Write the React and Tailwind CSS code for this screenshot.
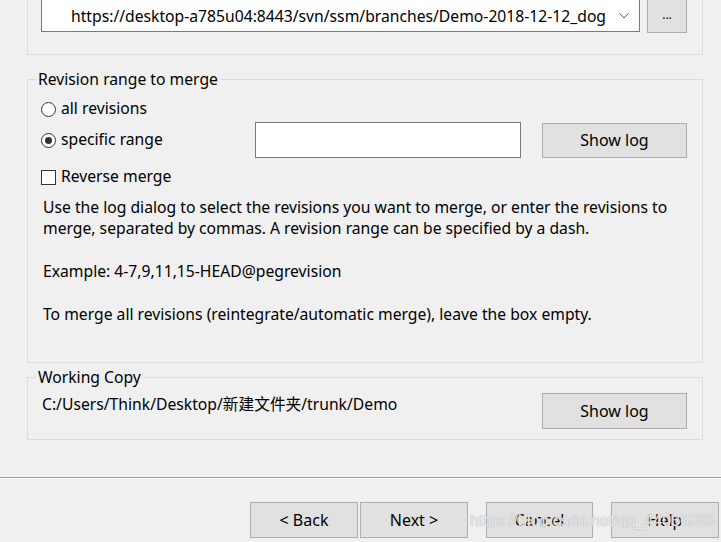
import React from "react";

const font = { fontFamily: '"Noto Sans", "Noto Sans CJK SC", sans-serif' };

function Btn({ children, className = "" }) {
  return (
    <div
      className={
        "flex items-center justify-center bg-[#e1e1e1] border border-[#adadad] text-[16px] text-black " +
        className
      }
    >
      {children}
    </div>
  );
}

function Radio({ checked }) {
  return (
    <span className="w-[15px] h-[15px] rounded-full border border-[#333] bg-white flex items-center justify-center shrink-0">
      {checked && <span className="w-[7px] h-[7px] rounded-full bg-[#333]" />}
    </span>
  );
}

export default function App() {
  return (
    <div
      className="relative w-[721px] h-[542px] overflow-hidden bg-[#f0f0f0] text-black flex flex-col text-[15.7px]"
      style={font}
    >
      {/* top group (cut off) */}
      <div className="ml-[27px] w-[676px] h-[55px] border-x border-b border-[#dcdcdc] flex items-start shrink-0">
        <div className="ml-[13px] w-[599px] h-[32px] bg-white border-x border-b border-[#7a7a7a] flex items-center pl-[29px] pr-[10px]">
          <span className="flex-1 leading-[20px] whitespace-nowrap overflow-hidden">
            https://desktop-a785u04:8443/svn/ssm/branches/Demo-2018-12-12_dog
          </span>
          <svg width="10" height="6" viewBox="0 0 10 6" className="ml-[8px] shrink-0">
            <path d="M0.5 0.5 L5 5 L9.5 0.5" fill="none" stroke="#555" strokeWidth="1" />
          </svg>
        </div>
        <div className="ml-[7px] w-[40px] h-[33px] bg-[#e1e1e1] border-x border-b border-[#adadad] flex items-center justify-center text-[12px] leading-none pb-[2px]">
          ...
        </div>
      </div>

      {/* Revision range */}
      <fieldset className="ml-[27px] mt-[14px] w-[676px] h-[294px] border border-[#dcdcdc] shrink-0">
        <legend className="ml-[8px] px-[2px] leading-[20px]">Revision range to merge</legend>
        <div className="flex items-center h-[20px] mt-[10px] ml-[13px]">
          <Radio />
          <span className="ml-[5px]">all revisions</span>
        </div>
        <div className="flex items-center h-[36px] mt-[3px] ml-[13px]">
          <Radio checked />
          <span className="ml-[5px] w-[194px]">specific range</span>
          <div className="w-[266px] h-[36px] bg-white border border-[#7a7a7a]" />
          <Btn className="ml-[21px] w-[145px] h-[35px]">Show log</Btn>
        </div>
        <div className="flex items-center h-[20px] mt-[9px] ml-[13px]">
          <span className="w-[15px] h-[15px] border border-[#333] bg-white shrink-0" />
          <span className="ml-[5px]">Reverse merge</span>
        </div>
        <div className="ml-[15px] mt-[10px] leading-[21px]">
          <p className="whitespace-nowrap">
            Use the log dialog to select the revisions you want to merge, or enter the revisions to
            <br />
            merge, separated by commas. A revision range can be specified by a dash.
          </p>
          <p className="mt-[22px]">Example: 4-7,9,11,15-HEAD@pegrevision</p>
          <p className="mt-[22px]">
            To merge all revisions (reintegrate/automatic merge), leave the box empty.
          </p>
        </div>
      </fieldset>

      {/* Working copy */}
      <fieldset className="ml-[27px] mt-[4px] w-[676px] h-[73px] border border-[#dcdcdc] shrink-0">
        <legend className="ml-[8px] px-[2px] leading-[20px]">Working Copy</legend>
        <div className="flex items-start justify-between ml-[14px] mr-[15px]">
          <span className="mt-[7px] leading-[20px]">C:/Users/Think/Desktop/新建文件夹/trunk/Demo</span>
          <Btn className="mt-[6px] w-[145px] h-[36px]">Show log</Btn>
        </div>
      </fieldset>

      {/* separator */}
      <div className="mt-[37px] h-px bg-[#a0a0a0] shrink-0" />
      <div className="h-px bg-white shrink-0" />

      {/* buttons */}
      <div className="flex mt-[23px] ml-[250px] shrink-0">
        <Btn className="w-[108px] h-[36px]">&lt; Back</Btn>
        <Btn className="ml-[2px] w-[108px] h-[36px]">Next &gt;</Btn>
        <Btn className="ml-[18px] w-[107px] h-[36px]">Cancel</Btn>
        <Btn className="ml-[18px] w-[108px] h-[36px]">Help</Btn>
      </div>

      {/* watermark */}
      <div
        className="absolute left-[470px] top-[510px] text-[16px] leading-[22px] text-white/80 whitespace-nowrap"
        style={{ fontFamily: '"Liberation Sans", sans-serif', textShadow: "0 0 1px #888" }}
      >
        https://blog.csdn.net/qq_44036266
      </div>
    </div>
  );
}
